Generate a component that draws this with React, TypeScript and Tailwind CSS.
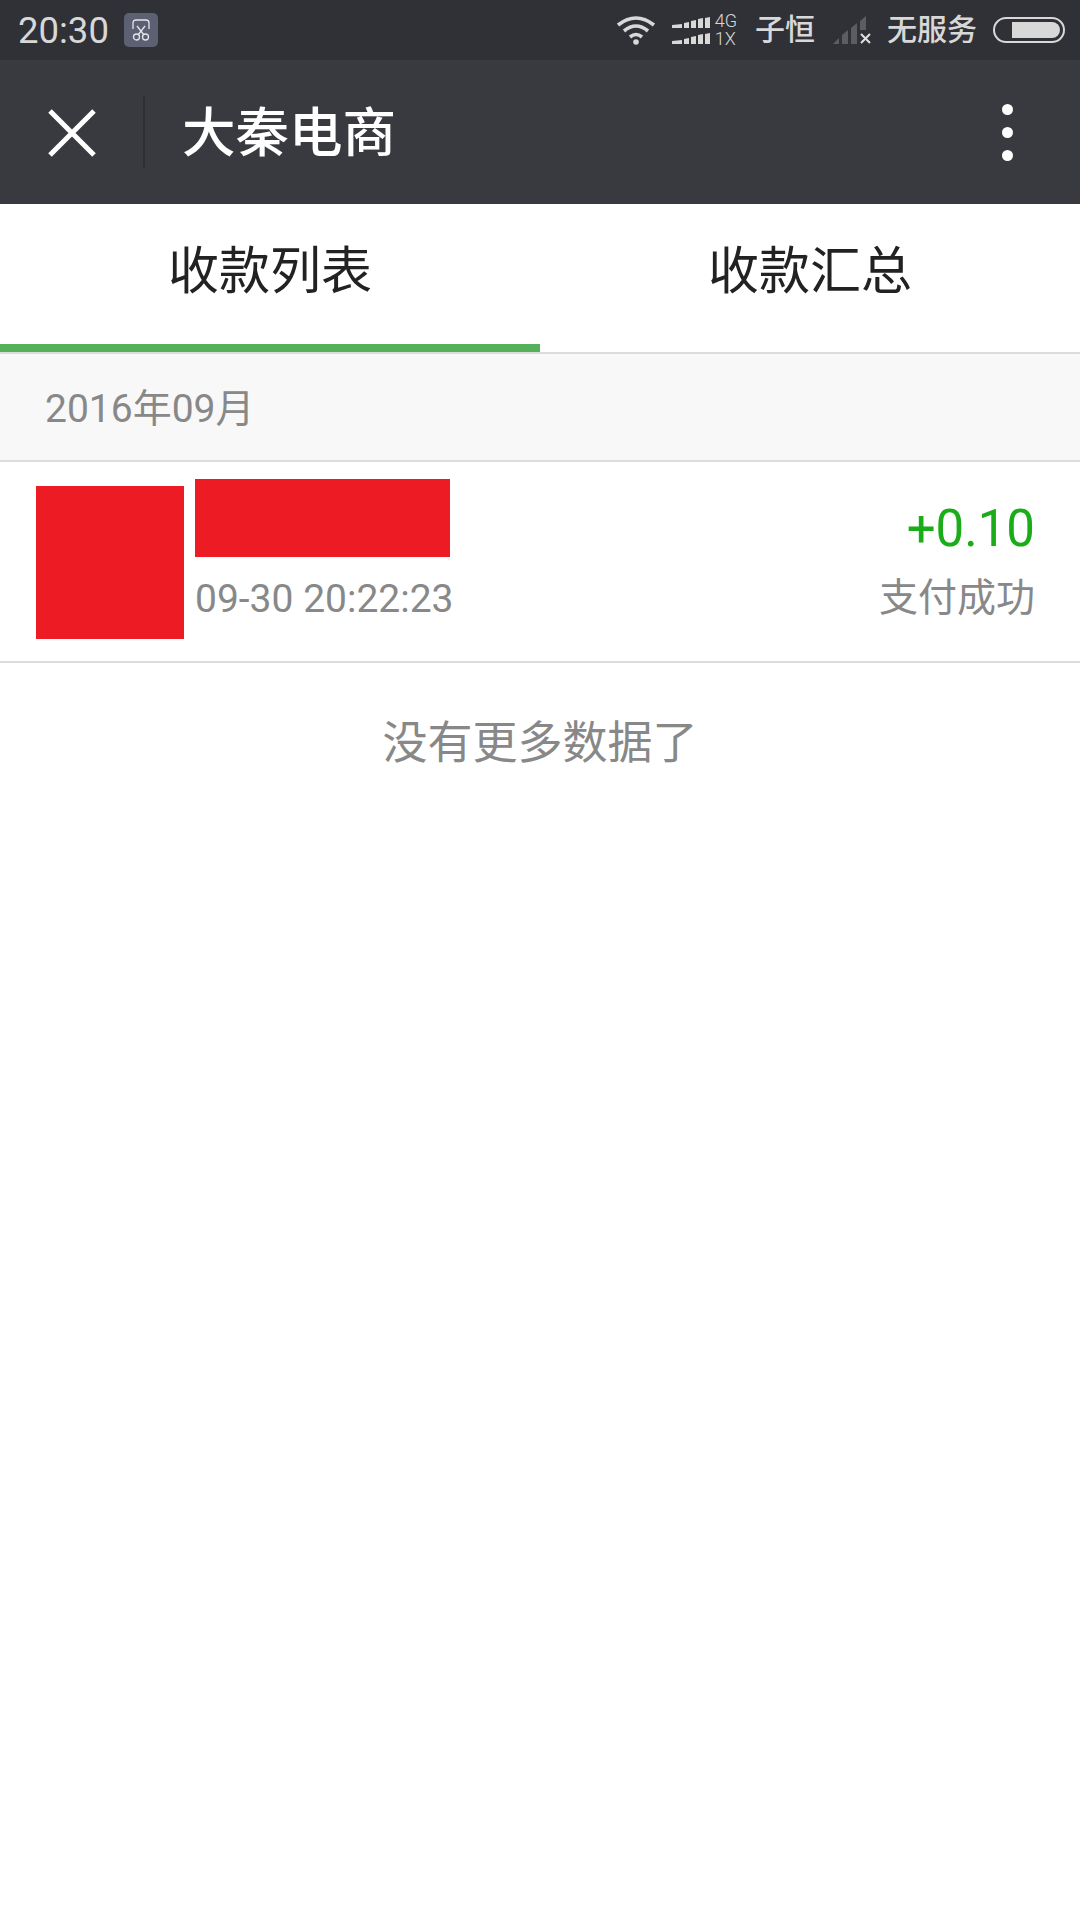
const cjk = "font-['Roboto','Noto_Sans_CJK_SC',sans-serif]";

function Wifi() {
  return (
    <svg width="40" height="30" viewBox="0 0 40 30" fill="none" stroke="#d8d8d8" strokeWidth="3.6">
      <path d="M2 10 Q20 -4 38 10" />
      <path d="M8 16 Q20 6 32 16" />
      <path d="M14 22 Q20 17 26 22" />
      <circle cx="20" cy="27" r="2.8" fill="#d8d8d8" stroke="none" />
    </svg>
  );
}

function SignalBars() {
  const row = (y: number) => (
    <g fill="#d8d8d8" transform={`translate(0 ${y})`}>
      <path d="M0 8 L10 7 V11 H0 Z" />
      <path d="M12 6 L17 5 V11 H12 Z" />
      <path d="M19 4 L24 3 V11 H19 Z" />
      <path d="M26 2 L31 1 V11 H26 Z" />
      <path d="M33 1 L38 0 V11 H33 Z" />
    </g>
  );
  return (
    <svg width="38" height="27" viewBox="0 0 38 27">
      {row(0)}
      {row(16)}
    </svg>
  );
}

function NoSignal() {
  return (
    <svg width="38" height="28" viewBox="0 0 38 28">
      <g fill="#5c5d60">
        <path d="M0 28 L6 22 V28 Z" />
        <path d="M9 19 L15 14 V28 H9 Z" />
        <path d="M18 12 L24 7 V28 H18 Z" />
        <path d="M27 5 L33 0 V14 H27 Z" />
      </g>
      <path d="M28 18 L37 27 M37 18 L28 27" stroke="#e0e0e0" strokeWidth="2" />
    </svg>
  );
}

function Battery() {
  return (
    <div className="relative h-[26px] w-[72px] rounded-full border-2 border-[#d8d8d8]">
      <div className="absolute right-[3px] top-[3px] h-[16px] w-[48px] rounded-r-full bg-[#d8d8d8]" />
    </div>
  );
}

export default function App() {
  return (
    <div className={`flex h-[1920px] w-[1080px] flex-col bg-white ${cjk}`}>
      <div className="flex h-[60px] items-center justify-between bg-[#303136] pl-[18px] pr-[15px] text-[#d8d8d8]">
        <div className="flex items-center gap-[15px]">
          <span className="pt-[2px] text-[36.5px] leading-none">20:30</span>
          <div className="flex h-[34px] w-[34px] items-center justify-center rounded-[5px] bg-[#5b6172]">
            <svg width="18" height="22" viewBox="0 0 18 22" fill="none" stroke="#e4e6ea" strokeWidth="1.3">
              <path d="M1 10 V4 Q1 1 4 1 H14 Q17 1 17 4 V10" />
              <path d="M5 7 L12 16 M13 7 L6 16" />
              <circle cx="4.5" cy="18" r="3" />
              <circle cx="13.5" cy="18" r="3" />
            </svg>
          </div>
        </div>
        <div className="flex items-center">
          <div className="mr-[16px]"><Wifi /></div>
          <div className="mr-[5px]"><SignalBars /></div>
          <div className="mr-[18px] flex flex-col text-[18px] leading-[18px] font-['Roboto',sans-serif] font-light">
            <span>4G</span>
            <span>1X</span>
          </div>
          <span className="mr-[18px] text-[30px] font-medium leading-none">子恒</span>
          <div className="mr-[16px]"><NoSignal /></div>
          <span className="mr-[16px] text-[30px] font-medium leading-none">无服务</span>
          <Battery />
        </div>
      </div>

      <div className="flex h-[144px] items-center bg-[#393a3f]">
        <div className="ml-[48px] mr-[47px] mt-[2px]">
          <svg width="48" height="48" viewBox="0 0 48 48" stroke="#ffffff" strokeWidth="5" className="block">
            <path d="M2 2 L46 46 M46 2 L2 46" />
          </svg>
        </div>
        <div className="h-[72px] w-[2px] bg-[#2e2f33]" />
        <span className="ml-[37px] mt-[4px] text-[53.5px] font-medium leading-none text-white">大秦电商</span>
        <div className="ml-auto mr-[67px] flex flex-col gap-[12px]">
          <div className="h-[11px] w-[11px] rounded-full bg-white" />
          <div className="h-[11px] w-[11px] rounded-full bg-white" />
          <div className="h-[11px] w-[11px] rounded-full bg-white" />
        </div>
      </div>

      <div className="flex h-[150px] border-b-2 border-[#dcdcdc] text-[51px] leading-none text-[#222222]">
        <div className="flex h-[148px] w-1/2 items-center justify-center border-b-[8px] border-[#55b05a] pb-[6px]">收款列表</div>
        <div className="flex h-[148px] w-1/2 items-center justify-center pb-[14px]">收款汇总</div>
      </div>

      <div className="flex h-[108px] items-center border-b-2 border-[#dcdcdc] bg-[#f8f8f8] pl-[45px] pt-[5px] text-[39px] leading-none text-[#888888]">
        2016年09月
      </div>

      <div className="flex h-[201px] items-start justify-between border-b-2 border-[#dcdcdc] pl-[36px] pr-[45px]">
        <div className="flex">
          <div className="mt-[24px] h-[153px] w-[148px] bg-[#ed1c24]" />
          <div className="ml-[11px] mt-[17px] flex flex-col">
            <div className="h-[78px] w-[255px] bg-[#ed1c24]" />
            <span className="mt-[23px] text-[39px] leading-none text-[#888888]">09-30 20:22:23</span>
          </div>
        </div>
        <div className="flex flex-col items-end">
          <span className="mt-[41px] text-[51px] leading-none text-[#1aad19]">+0.10</span>
          <span className="mt-[25px] text-[39px] leading-none text-[#888888]">支付成功</span>
        </div>
      </div>

      <div className="mt-[58px] text-center text-[45px] leading-none text-[#888888]">没有更多数据了</div>
    </div>
  );
}
